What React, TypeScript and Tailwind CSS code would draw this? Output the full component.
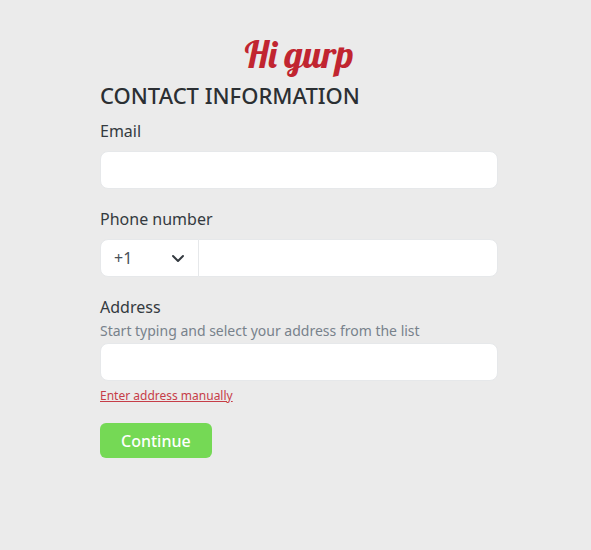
import { useState, type ReactNode } from 'react'

const CONTROL =
  'h-[38px] w-full min-w-0 border border-[#e6e8ea] bg-white px-[13px] text-base text-[#495057] outline-none focus:border-[#c12530]'

const DIAL_CODES = ['+1', '+44', '+52', '+61', '+91']

export default function App() {
  const [email, setEmail] = useState('')
  const [dialCode, setDialCode] = useState('+1')
  const [phone, setPhone] = useState('')
  const [address, setAddress] = useState('')

  return (
    <main className="min-h-screen bg-[#ebebeb] pr-[93px] pl-[100px] pt-[31px] pb-12 font-['Noto_Sans',sans-serif] text-[#343a40]">
      <h1 className="text-center font-['Lobster','Liberation_Serif',serif] text-[37px] leading-[46px] font-normal text-[#c12530]">
        Hi gurp
      </h1>

      <form onSubmit={(e) => e.preventDefault()}>
        <h2 className="mt-1 text-[22px] leading-7 font-medium text-[#2b2f33]">CONTACT INFORMATION</h2>

        <Field id="email" label="Email" className="mt-[10px]">
          <input
            id="email"
            type="email"
            value={email}
            onChange={(e) => setEmail(e.target.value)}
            className={`${CONTROL} mt-2 rounded-lg`}
          />
        </Field>

        <Field id="phone" label="Phone number" className="mt-[18px]">
          <div className="mt-2 flex">
            <div className="relative w-[99px] shrink-0">
              <select
                aria-label="Country code"
                value={dialCode}
                onChange={(e) => setDialCode(e.target.value)}
                className={`${CONTROL} appearance-none rounded-l-lg`}
              >
                {DIAL_CODES.map((code) => (
                  <option key={code}>{code}</option>
                ))}
              </select>
              <Chevron />
            </div>
            <input
              id="phone"
              type="tel"
              value={phone}
              onChange={(e) => setPhone(e.target.value)}
              className={`${CONTROL} -ml-px rounded-r-lg`}
            />
          </div>
        </Field>

        <Field id="address" label="Address" className="mt-[18px]">
          <p id="address-hint" className="text-sm leading-6 text-[#78828b]">
            Start typing and select your address from the list
          </p>
          <input
            id="address"
            type="text"
            aria-describedby="address-hint"
            value={address}
            onChange={(e) => setAddress(e.target.value)}
            className={`${CONTROL} rounded-lg`}
          />
        </Field>

        <a href="#manual" className="mt-[5px] block w-fit text-xs leading-5 text-[#c63d48] underline">
          Enter address manually
        </a>

        <button
          type="submit"
          className="mt-[17px] block h-[35px] rounded-md bg-[#75d955] px-[21px] text-base font-medium text-white"
        >
          Continue
        </button>
      </form>
    </main>
  )
}

function Field({
  id,
  label,
  className,
  children
}: {
  id: string
  label: string
  className: string
  children: ReactNode
}) {
  return (
    <div className={className}>
      <label htmlFor={id} className="block text-base leading-6">
        {label}
      </label>
      {children}
    </div>
  )
}

/** Sits over the select, in place of the native arrow. */
function Chevron() {
  return (
    <svg
      viewBox="0 0 14 14"
      className="pointer-events-none absolute top-3 right-[14px] size-3.5 text-[#343a40]"
      fill="none"
      stroke="currentColor"
      strokeWidth="2"
      strokeLinecap="round"
      strokeLinejoin="round"
      aria-hidden="true"
    >
      <path d="M2 5l5 5 5-5" />
    </svg>
  )
}
